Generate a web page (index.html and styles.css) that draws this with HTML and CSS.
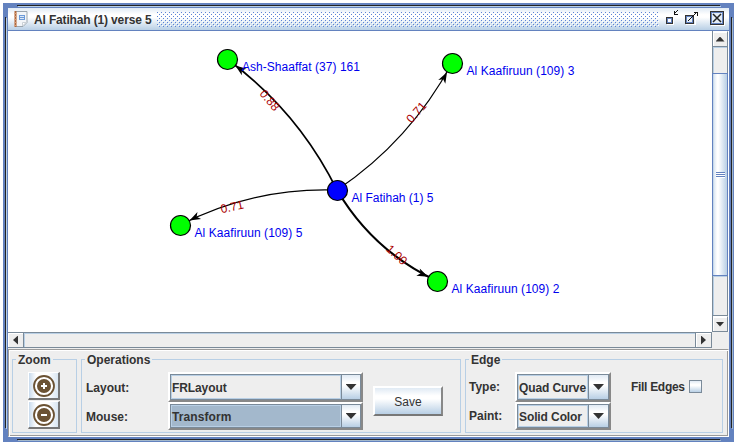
FILE: index.html
```html
<!DOCTYPE html>
<html lang="en">
<head>
<meta charset="utf-8">
<title>Al Fatihah (1) verse 5</title>
<link rel="stylesheet" href="styles.css">
</head>
<body>
<main class="window">
  <header class="titlebar">
    <svg class="title-icon" width="16" height="16" viewBox="0 0 16 16">
      <path d="M2.5.5h11.500v11l-4 4h-7.500z" fill="#f2f5f8" stroke="#9aa5af"/>
      <path d="M9.500 15v-3.500H13z" fill="#fff" stroke="#c9d0d6"/>
      <path d="M2.500 0v16" stroke="#b0683c" stroke-width="2"/>
      <path d="M1 2.500h3M1 5.500h3M1 8.500h3M1 11.500h3M1 14.500h3" stroke="#d9a27e"/>
      <path d="M6 4h6v5H6z" fill="#6d9bd8"/><path d="M7 5.500h4M7 7.500h4" stroke="#dce9f8"/>
    </svg>
    <h1 class="title">Al Fatihah (1) verse 5</h1>
    <svg class="bumps" width="502" height="15" shape-rendering="crispEdges">
      <defs>
        <pattern id="dots" width="4" height="4" patternUnits="userSpaceOnUse">
          <path d="M0 0h1v1H0zM2 2h1v1H2z" fill="#5b83d6"/>
          <path d="M1 1h1v1H1zM3 3h1v1H3z" fill="#fff"/>
        </pattern>
      </defs>
      <rect width="502" height="15" fill="url(#dots)"/>
    </svg>
    <svg class="controls" width="60" height="16" viewBox="0 0 60 16" shape-rendering="crispEdges">
      <path d="M2 14.500h6.500V8" fill="none" stroke="#fff"/>
      <path d="M1.500 7.500h6v6h-6z" fill="#fff" stroke="#333"/>
      <path d="M2.500 8.500h4v4h-4z" fill="#fff" stroke="#6382bf"/>
      <path d="M9 1h1v3h3v1H9zM10 3h1V2h-1zM11 2h1V1h-1zM12 1h1V0h-1z" fill="#111"/>
      <path d="M21 14.500h9.500V6" fill="none" stroke="#fff"/>
      <path d="M20.500 5.500h8v8h-8z" fill="#e9f1f8" stroke="#333"/>
      <path d="M21.500 6.500h6v6h-6z" fill="none" stroke="#6382bf"/>
      <path d="M23 11h1v-1h-1zM24 10h1V9h-1zM25 9h1V8h-1zM26 8h1V7h-1zM27 7h1V6h-1zM28 6h1V5h-1zM29 5h1V4h-1zM29 2h4v4h-1V3h-3zM30 4h1V3h-1z" fill="#111"/>
      <path d="M46 15.500h13.500V2" fill="none" stroke="#fff"/>
      <path d="M45.500 1.500h13v13h-13z" fill="#e4edf7" stroke="#333"/>
      <path d="M46.500 2.500h11v11h-11z" fill="none" stroke="#6382bf"/>
      <path d="M48 4l8 8M56 4l-8 8" stroke="#222" stroke-width="1.500" shape-rendering="auto"/>
    </svg>
  </header>

  <section class="viewport">
    <svg class="graph" width="704" height="301" viewBox="8 31 704 301">
      <defs><path id="arrow" d="M0 0-11-4-8 0-11 4z"/></defs>
      <g fill="none" stroke="#000">
        <path d="M337 190Q298 111 227 59" stroke-width="1.700"/>
        <path d="M337 190Q410 141 452 63" stroke-width="1.200"/>
        <path d="M337 190Q254 187 180 225" stroke-width="1.200"/>
        <path d="M337 190Q373 251 437 281" stroke-width="2.100"/>
      </g>
      <use href="#arrow" transform="translate(235.300 65.500) rotate(-143.800)"/>
      <use href="#arrow" transform="translate(447 72.200) rotate(-61.700)"/>
      <use href="#arrow" transform="translate(189.500 220.500) rotate(152.800)"/>
      <use href="#arrow" transform="translate(428 276.700) rotate(25.100)"/>
      <g class="weight">
        <text y="4.500" transform="translate(270 100) rotate(50)">0.88</text>
        <text y="4.500" transform="translate(416 112) rotate(-48)">0.71</text>
        <text y="4.500" transform="translate(232 206.500) rotate(-12)">0.71</text>
        <text y="4.500" transform="translate(397 254.500) rotate(42)">1.00</text>
      </g>
      <g fill="#0f0" stroke="#000" stroke-width="1.200">
        <circle cx="227.500" cy="59.500" r="10"/>
        <circle cx="452.500" cy="63.500" r="10"/>
        <circle cx="180.500" cy="225.500" r="10"/>
        <circle cx="437.500" cy="281.500" r="10"/>
        <circle cx="337.500" cy="190.500" r="10" fill="#00f"/>
      </g>
      <g class="name">
        <text x="242" y="71" textLength="118">Ash-Shaaffat (37) 161</text>
        <text x="466.500" y="75" textLength="108">Al Kaafiruun (109) 3</text>
        <text x="194.500" y="237" textLength="108">Al Kaafiruun (109) 5</text>
        <text x="451.500" y="293" textLength="108">Al Kaafiruun (109) 2</text>
        <text x="351.500" y="202" textLength="82">Al Fatihah (1) 5</text>
      </g>
    </svg>
    <div class="vscroll">
      <span class="step"><i class="tri up"></i></span>
      <span class="track-gap"></span>
      <span class="thumb"><i class="grip"></i></span>
      <span class="track-rest"></span>
      <span class="step"><i class="tri down"></i></span>
    </div>
    <div class="hscroll">
      <span class="hstep"><i class="tri left"></i></span>
      <span class="htrack"></span>
      <span class="hstep"><i class="tri right"></i></span>
    </div>
    <div class="corner"></div>
  </section>

  <section class="panel">
    <div class="group zoom">
      <h2 class="legend">Zoom</h2>
      <button class="zoom-btn"><svg width="22" height="22" viewBox="0 0 22 22"><circle cx="11" cy="11" r="10" fill="#fff" stroke="#6b5233" stroke-width="1.800"/><circle cx="11" cy="11" r="7" fill="#6b5233"/><path d="M8 11h6M11 8v6" stroke="#fff" stroke-width="2"/></svg></button>
      <button class="zoom-btn"><svg width="22" height="22" viewBox="0 0 22 22"><circle cx="11" cy="11" r="10" fill="#fff" stroke="#6b5233" stroke-width="1.800"/><circle cx="11" cy="11" r="7" fill="#6b5233"/><path d="M8 11h6" stroke="#fff" stroke-width="2"/></svg></button>
    </div>
    <div class="group operations">
      <h2 class="legend">Operations</h2>
      <div class="labels"><span>Layout:</span><span>Mouse:</span></div>
      <div class="combos">
        <div class="combo"><span class="value">FRLayout</span><span class="drop"><i class="tri down big"></i></span></div>
        <div class="combo short active"><span class="value">Transform</span><span class="drop"><i class="tri down big"></i></span></div>
      </div>
      <button class="save">Save</button>
    </div>
    <div class="group edge">
      <h2 class="legend">Edge</h2>
      <div class="labels"><span>Type:</span><span>Paint:</span></div>
      <div class="combos">
        <div class="combo"><span class="value">Quad Curve</span><span class="drop"><i class="tri down big"></i></span></div>
        <div class="combo short"><span class="value">Solid Color</span><span class="drop"><i class="tri down big"></i></span></div>
      </div>
      <div class="fill"><span>Fill Edges</span><span class="check"></span></div>
    </div>
  </section>
</main>
</body>
</html>
```

FILE: styles.css
```css
* { box-sizing: border-box; }
body {
  margin: 0;
  padding: 3px;
  background: #fff;
  color: #333;
  font: bold 12px/14px "Liberation Sans", Arial, sans-serif;
  overflow: hidden;
}
/* Frame with engraved dark/light lines on each side */
.window {
  width: 731px;
  height: 439px;
  padding: 5px;
  background:
    linear-gradient(#222, #222) 14px 2px / 703px 1px,
    linear-gradient(#b8cfe5, #b8cfe5) 15px 3px / 703px 1px,
    linear-gradient(#222, #222) 14px 436px / 703px 1px,
    linear-gradient(#a3b8cc, #a3b8cc) 15px 437px / 703px 1px,
    linear-gradient(#222, #222) 2px 14px / 1px 411px,
    linear-gradient(#b8cfe5, #b8cfe5) 3px 15px / 1px 411px,
    linear-gradient(#222, #222) 728px 14px / 1px 411px,
    linear-gradient(#a3b8cc, #a3b8cc) 729px 15px / 1px 411px,
    #6382bf;
  background-repeat: no-repeat;
}
.titlebar {
  display: flex;
  align-items: flex-start;
  height: 23px;
  padding: 3px 4px 0 5px;
  border-bottom: 1px solid #6382bf;
  background: linear-gradient(#e0eaf4, #fff 30%, #fff 42%, #b8cfe5);
}
.title-icon { flex: none; }
.title {
  flex: none;
  width: 123px;
  margin: 2px 0 0 5px;
  font: inherit;
  letter-spacing: -.15px;
  white-space: nowrap;
}
.bumps { flex: none; margin-top: 1px; }
.controls { flex: none; margin: -1px 0 0 6px; }

.viewport {
  display: grid;
  grid-template: 301px 17px / 704px 17px;
  background: #eee;
}
.graph { display: block; background: #fff; }
.graph text { font: 12px "Liberation Sans", Arial, sans-serif; }
.name { fill: #00e; }
.weight { fill: #a00; text-anchor: middle; }

.vscroll {
  display: flex;
  flex-direction: column;
  border-left: 1px solid #7a8a99;
  border-right: 1px solid #fff;
}
.vscroll > span { border-right: 1px solid #7a8a99; }
.step {
  height: 16px;
  display: grid;
  place-items: center;
  background: #eee;
  border-top: 1px solid #fff;
  border-bottom: 1px solid #7a8a99;
  box-shadow: inset 1px 1px #fff;
}
.track-gap { height: 26px; box-shadow: inset 1px 1px #b8cfe5; }
.thumb {
  height: 203px;
  display: grid;
  place-items: center;
  border: solid #6382bf;
  border-width: 1px 0;
  margin-left: -1px;
  border-left: 1px solid #6382bf;
  background: linear-gradient(90deg, #b8cfe5, #e0eaf4 10%, #fff 30%, #fff 38%, #b8cfe5);
}
.vscroll > .thumb { border-right-color: #6382bf; }
.grip {
  width: 9px;
  height: 6px;
  background: repeating-linear-gradient(#6382bf 0 1px, #fff 1px 2px);
}
.track-rest { flex: 1; border-bottom: 1px solid #7a8a99; box-shadow: inset 1px 1px #b8cfe5; }
.hscroll {
  display: flex;
  height: 16px;
  border-top: 1px solid #7a8a99;
}
.hscroll > span { border-bottom: 1px solid #7a8a99; }
.hstep {
  width: 16px;
  display: grid;
  place-items: center;
  box-shadow: inset 1px 1px #fff;
  border-right: 1px solid #7a8a99;
}
.htrack { flex: 1; border-right: 1px solid #7a8a99; box-shadow: inset 1px 1px #b8cfe5; }

.tri { display: block; width: 9px; height: 5px; background: #333; }
.up { clip-path: polygon(50% 0, 100% 100%, 0 100%); }
.down { clip-path: polygon(0 0, 100% 0, 50% 100%); }
.left { width: 5px; height: 9px; clip-path: polygon(0 50%, 100% 0, 100% 100%); }
.right { width: 5px; height: 9px; clip-path: polygon(0 0, 100% 50%, 0 100%); }
.big { width: 11px; height: 6px; }

.panel {
  display: flex;
  gap: 4px;
  height: 88px;
  padding: 9px 5px 2px 3px;
  border: 1px solid #9a9a9a;
  border-right-color: #fff;
  border-bottom-color: #fff;
  background: #eee;
  box-shadow: inset 1px 1px #fff, inset -1px -1px #9a9a9a;
}
.group { height: 74px; border: 1px solid #b8cfe5; }
.legend {
  width: max-content;
  height: 14px;
  margin: -7px 0 5px 3px;
  padding: 0 2px;
  background: #eee;
  font: inherit;
}
.zoom { width: 65px; }
.zoom-btn {
  display: grid;
  place-items: center;
  width: 32px;
  height: 28px;
  margin: 0 0 1px 15px;
  padding: 0;
  border: 2px solid #fff;
  border-width: 1px 2px 2px 1px;
  border-right-color: #777;
  border-bottom-color: #777;
  background: linear-gradient(90deg, #c8daec, #fff 25% 65%, #d9e6f2);
}
.operations, .edge {
  display: grid;
  grid-template-rows: 12px 1fr;
  align-items: start;
}
.operations { grid-template-columns: 86px 195px 1fr; width: 380px; }
.edge { grid-template-columns: 49px 96px 1fr; width: 258px; }
.operations .legend, .edge .legend { grid-column: 1 / -1; }
.labels {
  display: grid;
  gap: 15px;
  margin: 9px 0 0 4px;
}
.edge .labels { margin: 8px 0 0 3px; }
.combo {
  display: flex;
  height: 30px;
  border: 2px solid #fff;
  border-right-color: #888;
  border-bottom-color: #888;
}
.short { height: 28px; }
.value {
  flex: 1;
  display: flex;
  align-items: center;
  padding: 1px 0 0 1px;
  border: 1px solid #7a8a99;
  border-right: 0;
  box-shadow: inset 0 0 0 1px #b8cfe5;
  letter-spacing: -.1px;
  white-space: nowrap;
}
.active .value { background: #a3b8cc; letter-spacing: .1px; }
.drop {
  width: 20px;
  display: grid;
  place-items: center;
  border: 1px solid #7a8a99;
  background: linear-gradient(#e0eaf4, #fff 30% 42%, #b8cfe5);
}
.edge .drop { width: 21px; }
.save {
  width: 70px;
  height: 30px;
  margin: 14px 0 0 10px;
  padding: 2px 0 0;
  border: 2px solid #fff;
  border-right-color: #888;
  border-bottom-color: #777;
  background: linear-gradient(#e0eaf4, #fff 30% 42%, #b8cfe5);
  color: #333;
  font: 12px "Liberation Sans", Arial, sans-serif;
}
.fill { display: flex; justify-content: flex-start; gap: 4px; margin: 8px 0 0 20px; letter-spacing: -.3px; white-space: nowrap; }
.check {
  width: 13px;
  height: 13px;
  border: 1px solid #7a8a99;
  background: linear-gradient(#e0eaf4, #fff 30% 42%, #b8cfe5);
}
```
